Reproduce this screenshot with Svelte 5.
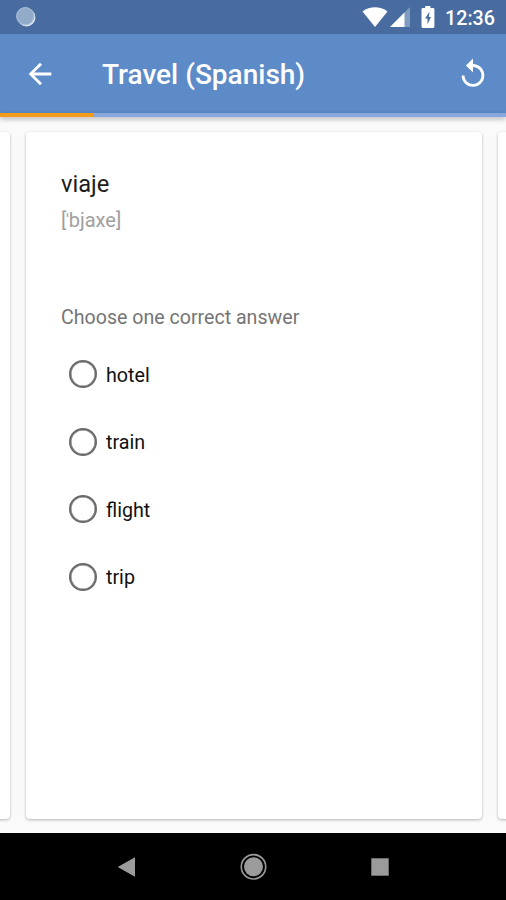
<script lang="ts">
	interface Card {
		word: string;
		transcription: string;
		options: string[];
	}

	let title = 'Travel (Spanish)';
	let progress = 18.4;
	let selected = '';

	let card: Card = {
		word: 'viaje',
		transcription: 'bjaxe',
		options: ['hotel', 'train', 'flight', 'trip']
	};
</script>

<div class="screen">
	<div class="status-bar">
		<svg class="sync" width="22" height="22" viewBox="0 0 22 22">
			<circle cx="11.4" cy="11.4" r="9" fill="#dce8f5" />
			<circle cx="10.3" cy="10.2" r="9" fill="#92abc9" />
			<circle cx="10.3" cy="10.2" r="8.6" fill="none" stroke="#adc1da" />
		</svg>
		<svg class="wifi" width="26" height="20" viewBox="0 0 26 20">
			<path d="M0.5 4.4C8-1 18-1 25.5 4.4L13 20Z" fill="#fff" />
		</svg>
		<svg class="signal" width="20" height="20" viewBox="0 0 20 20">
			<path d="M0 20L20 0V20Z" fill="#7f9bc2" />
			<path d="M0 20L14.5 5.5V20Z" fill="#fff" />
		</svg>
		<svg class="battery" width="14" height="22" viewBox="0 0 14 22">
			<path
				d="M4.2 0h5.2v2H12q1.4 0 1.4 1.4v17Q13.4 22 12 22H2Q.5 22 .5 20.4v-17Q.5 2 2 2h2.2z"
				fill="#fff"
			/>
			<path d="M8.6 5.5L4 12.6h2.5v5.6L10 11H7.8z" fill="#486c9f" />
		</svg>
		<span class="clock">12:36</span>
	</div>

	<header class="toolbar">
		<button class="icon-button" aria-label="Back">
			<svg width="34" height="34" viewBox="0 0 24 24">
				<path d="M20 11H7.83l5.59-5.59L12 4l-8 8 8 8 1.41-1.41L7.83 13H20v-2z" fill="#fff" />
			</svg>
		</button>
		<h1>{title}</h1>
		<button class="icon-button" aria-label="Restart">
			<svg width="34" height="34" viewBox="0 0 24 24">
				<path
					d="M12 5V1L7 6l5 5V7c3.31 0 6 2.69 6 6s-2.69 6-6 6-6-2.69-6-6H4c0 4.42 3.58 8 8 8s8-3.58 8-8-3.58-8-8-8z"
					fill="#fff"
				/>
			</svg>
		</button>
	</header>
	<div class="progress">
		<div class="bar" style="width: {progress}%"></div>
	</div>

	<main class="pager">
		<section class="card"></section>
		<section class="card">
			<h2>{card.word}</h2>
			<p class="transcription">[<span class="stress">ˈ</span>{card.transcription}]</p>
			<p class="hint">Choose one correct answer</p>
			<div class="options">
				{#each card.options as option (option)}
					<label>
						<input type="radio" name="answer" value={option} bind:group={selected} />
						<span>{option}</span>
					</label>
				{/each}
			</div>
		</section>
		<section class="card"></section>
	</main>

	<nav class="nav-bar">
		<svg width="28" height="28" viewBox="0 0 28 28">
			<path d="M5.7 14L23 4.3v19.4z" fill="#9b9b9b" />
		</svg>
		<svg width="28" height="28" viewBox="0 0 28 28">
			<circle cx="14.5" cy="13.8" r="12.2" fill="none" stroke="#9b9b9b" stroke-width="1.6" />
			<circle cx="14.5" cy="13.8" r="9.5" fill="#9b9b9b" />
		</svg>
		<svg width="28" height="28" viewBox="0 0 28 28">
			<rect x="5.3" y="5.3" width="17.4" height="17.4" fill="#9b9b9b" />
		</svg>
	</nav>
</div>

<style>
	:global(body) {
		margin: 0;
	}

	.screen {
		display: flex;
		flex-direction: column;
		width: 506px;
		height: 900px;
		overflow: hidden;
		background: #fafafa;
		font-family: Roboto, sans-serif;
	}

	.status-bar {
		display: flex;
		align-items: center;
		box-sizing: border-box;
		height: 34px;
		padding: 0 11px 0 15px;
		background: #486c9f;
		color: #fff;
	}

	.wifi {
		margin-left: auto;
	}

	.signal {
		margin-left: 2px;
	}

	.battery {
		margin-left: 11px;
	}

	.clock {
		margin: 2px 0 0 10px;
		font-size: 19.7px;
		font-weight: 500;
	}

	.toolbar {
		display: flex;
		align-items: center;
		box-sizing: border-box;
		height: 79px;
		padding: 0 16px 0 23px;
		background: #5c8bc8;
	}

	.icon-button {
		display: flex;
		padding: 0;
		border: none;
		background: none;
	}

	h1 {
		flex: 1;
		margin: 2px 0 0 45px;
		font-size: 28px;
		font-weight: 500;
		color: #fff;
	}

	.progress {
		height: 4px;
		background: #86a8dc;
		box-shadow: 0 2px 5px rgba(0, 0, 0, 0.3);
	}

	.bar {
		height: 100%;
		background: #f49b1a;
	}

	.pager {
		display: flex;
		flex: 1;
		justify-content: center;
		gap: 16px;
		padding: 15px 0 14px 2px;
	}

	.card {
		flex: none;
		box-sizing: border-box;
		width: 456px;
		padding: 36px 35px;
		border-radius: 4px;
		background: #fff;
		box-shadow: 0 1px 3px rgba(0, 0, 0, 0.28);
	}

	h2 {
		margin: 0;
		font-size: 23.7px;
		font-weight: 400;
		line-height: 32px;
		color: #1c1c1c;
	}

	.transcription {
		display: flex;
		margin: 6px 0 0;
		font-size: 20px;
		line-height: 28px;
		color: #a0a0a0;
	}

	.stress {
		font-family: 'Noto Sans', sans-serif;
		font-size: 15px;
		line-height: 24px;
	}

	.hint {
		margin: 70px 0 0;
		font-size: 19.6px;
		line-height: 28px;
		color: #757575;
	}

	.options {
		padding: 8px 0 0 8px;
	}

	label {
		display: flex;
		align-items: center;
		gap: 9px;
		height: 67.5px;
		font-size: 19.7px;
		color: #111;
	}

	label span {
		margin-top: 3px;
	}

	input {
		appearance: none;
		box-sizing: border-box;
		width: 28px;
		height: 28px;
		margin: 1px 0 0;
		border: 2px solid #6a6a6a;
		border-radius: 50%;
		box-shadow: inset 0 0 0 0.5px #6a6a6a;
	}

	.nav-bar {
		display: flex;
		align-items: center;
		justify-content: center;
		gap: 99px;
		height: 67px;
		background: #000;
	}
</style>
